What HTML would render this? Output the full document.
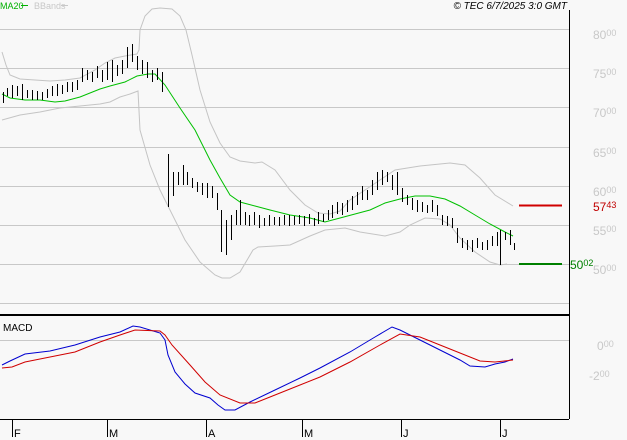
<!DOCTYPE html>
<html><head><meta charset="utf-8"><style>
html,body{margin:0;padding:0;background:#f8f8f8;}
svg{display:block;font-family:"Liberation Sans",sans-serif;}
</style></head><body>
<svg width="627" height="440" viewBox="0 0 627 440" xmlns="http://www.w3.org/2000/svg">
<rect width="627" height="440" fill="#f8f8f8"/>
<g stroke="#c8c8c8" stroke-width="1">
<line x1="0" y1="29.5" x2="569" y2="29.5"/>
<line x1="0" y1="68.5" x2="569" y2="68.5"/>
<line x1="0" y1="107.5" x2="569" y2="107.5"/>
<line x1="0" y1="147.5" x2="569" y2="147.5"/>
<line x1="0" y1="186.5" x2="569" y2="186.5"/>
<line x1="0" y1="225.5" x2="569" y2="225.5"/>
<line x1="0" y1="264.5" x2="569" y2="264.5"/>
<line x1="0" y1="303.5" x2="569" y2="303.5"/>
<line x1="0" y1="340.5" x2="569" y2="340.5"/>
</g>
<g fill="none" stroke="#c4c4c4" stroke-width="1">
<polyline points="2,52 6,65 10,75 20,79 35,80 50,81 65,80 80,78 95,70 105,63 115,58 125,56 137,54 139,50 140,30 145,16 152,9 160,8 172,9 180,16 186,30 192,55 200,90 210,122 220,143 230,157 240,161 255,163 262,162 275,170 290,190 305,205 318,213 330,214 340,211 350,200 365,190 380,180 395,170 420,166 450,163 465,165 480,178 495,195 513,206"/>
<polyline points="2,120 20,115 40,112 60,108 80,106 100,104 110,102 120,97 130,94 138,91 140,130 150,165 160,190 170,210 185,240 200,262 215,275 222,278 230,278 240,272 253,250 258,247 275,246 290,245 310,236 325,230 345,228 360,232 385,236 400,232 410,225 425,218 440,219 450,225 460,238 475,252 490,262 500,265 507,264"/>
</g>
<polyline fill="none" stroke="#00c000" stroke-width="1" points="2,94 10,98 25,100 40,100 55,102 65,101 80,97 100,89 110,86 125,82 137,76 148,74 155,74 165,85 180,108 195,130 210,160 220,178 230,195 240,202 255,206 270,210 290,215 310,218 325,222 340,218 355,214 370,210 385,203 400,199 415,196 430,196 445,199 460,206 475,215 490,224 505,232 513,236"/>
<path fill="none" stroke="#000" stroke-width="1" d="M3.5 92V103M7.5 88V96M12.5 85V98M17.5 86V96M22.5 84V100M27.5 90V98M32.5 90V100M37.5 91V100M42.5 92V100M47.5 89V98M52.5 86V96M57.5 84V96M62.5 85V94M67.5 82V92M72.5 82V92M77.5 80V90M82.5 68V82M87.5 70V80M92.5 72V82M97.5 66V78M102.5 70V82M107.5 62V80M112.5 60V82M117.5 65V76M122.5 60V74M127.5 47V68M132.5 44V62M137.5 56V70M142.5 60V74M147.5 62V78M152.5 70V82M157.5 68V80M162.5 72V92M168.5 154V207M173.5 172V196M178.5 172V185M183.5 165V185M187.5 172V185M192.5 178V188M197.5 182V192M202.5 183V195M207.5 183V198M212.5 186V198M217.5 193V210M221.5 210V252M226.5 220V255M231.5 215V240M236.5 210V225M240.5 200V225M245.5 212V225M249.5 215V226M254.5 212V225M259.5 215V228M264.5 218V226M269.5 215V226M274.5 217V225M279.5 217V226M284.5 215V225M289.5 215V226M294.5 216V225M299.5 215V224M304.5 216V226M309.5 214V224M314.5 218V226M318.5 212V224M323.5 214V222M328.5 210V220M332.5 205V218M337.5 202V214M342.5 203V215M347.5 200V212M352.5 196V210M357.5 192V205M362.5 186V200M367.5 190V200M372.5 180V195M377.5 172V190M382.5 170V185M387.5 172V182M392.5 175V190M397.5 172V195M402.5 188V202M407.5 195V205M412.5 198V210M417.5 200V212M422.5 202V212M427.5 205V213M432.5 200V212M437.5 205V216M442.5 215V225M447.5 216V226M452.5 218V228M457.5 228V243M462.5 238V248M467.5 240V250M472.5 240V252M477.5 238V248M482.5 242V250M487.5 240V250M492.5 236V246M497.5 232V246M500.5 230V265M505.5 232V240M510.5 230V245M514.5 243V250"/>
<line x1="519" y1="205.5" x2="562" y2="205.5" stroke="#d00000" stroke-width="2"/>
<line x1="519" y1="264" x2="562" y2="264" stroke="#008000" stroke-width="2"/>
<line x1="569.5" y1="10" x2="569.5" y2="419" stroke="#000" stroke-width="1"/>
<line x1="0" y1="315" x2="569" y2="315" stroke="#000" stroke-width="2"/>
<line x1="0" y1="419.5" x2="569" y2="419.5" stroke="#000" stroke-width="1"/>
<g stroke="#000" stroke-width="1">
<line x1="12.5" y1="419" x2="12.5" y2="437"/>
<line x1="107.5" y1="419" x2="107.5" y2="437"/>
<line x1="206.5" y1="419" x2="206.5" y2="437"/>
<line x1="302.5" y1="419" x2="302.5" y2="437"/>
<line x1="401.5" y1="419" x2="401.5" y2="437"/>
<line x1="500.5" y1="419" x2="500.5" y2="437"/>
</g>
<g font-size="11" fill="#000">
<text x="14" y="437">F</text><text x="109" y="437">M</text><text x="208" y="437">A</text><text x="304" y="437">M</text><text x="403" y="437">J</text><text x="502" y="437">J</text>
</g>
<polyline fill="none" stroke="#0000d0" stroke-width="1" points="2,365 10,361 25,354 50,351 75,345 100,337 120,332 133,326 140,327 160,333 165,340 168,355 175,372 185,384 195,393 210,398 218,405 225,410 235,410 250,402 275,390 300,378 320,368 350,352 375,337 392,327 400,330 420,340 440,350 460,360 470,366 485,367 495,364 505,362 513,359"/>
<polyline fill="none" stroke="#d00000" stroke-width="1" points="2,368 12,367 25,362 50,357 75,352 100,342 120,335 135,330 160,331 165,335 172,345 190,365 205,382 220,395 240,403 255,403 270,397 300,385 320,377 350,362 380,345 400,334 420,337 440,345 460,353 480,361 495,362 513,360"/>
<text x="3" y="331" font-size="10" fill="#000">MACD</text>
<text x="0" y="9" font-size="9" fill="#00b000">MA20</text>
<line x1="21" y1="5.5" x2="28" y2="5.5" stroke="#00b000"/>
<text x="34" y="9" font-size="9" fill="#c8c8c8">BBands</text>
<line x1="61" y1="5.5" x2="68" y2="5.5" stroke="#c8c8c8"/>
<text x="567" y="9" font-size="10" font-style="italic" fill="#000" text-anchor="end">© TEC 6/7/2025 3:0 GMT</text>
<g font-size="12" fill="#c8c8c8">
<text x="593" y="39">80<tspan font-size="9" dy="-3">00</tspan></text>
<text x="593" y="78">75<tspan font-size="9" dy="-3">00</tspan></text>
<text x="593" y="117">70<tspan font-size="9" dy="-3">00</tspan></text>
<text x="593" y="157">65<tspan font-size="9" dy="-3">00</tspan></text>
<text x="593" y="196">60<tspan font-size="9" dy="-3">00</tspan></text>
<text x="593" y="235">55<tspan font-size="9" dy="-3">00</tspan></text>
<text x="593" y="274">50<tspan font-size="9" dy="-3">00</tspan></text>
<text x="597" y="350">0<tspan font-size="9" dy="-3">00</tspan></text>
<text x="589" y="380">-2<tspan font-size="9" dy="-3">00</tspan></text>
</g>
<text x="593" y="211" font-size="12" fill="#c00000">57<tspan font-size="9" dy="-3">43</tspan></text>
<text x="570" y="269" font-size="12" fill="#008000">50<tspan font-size="9" dy="-3">02</tspan></text>
</svg>
</body></html>
